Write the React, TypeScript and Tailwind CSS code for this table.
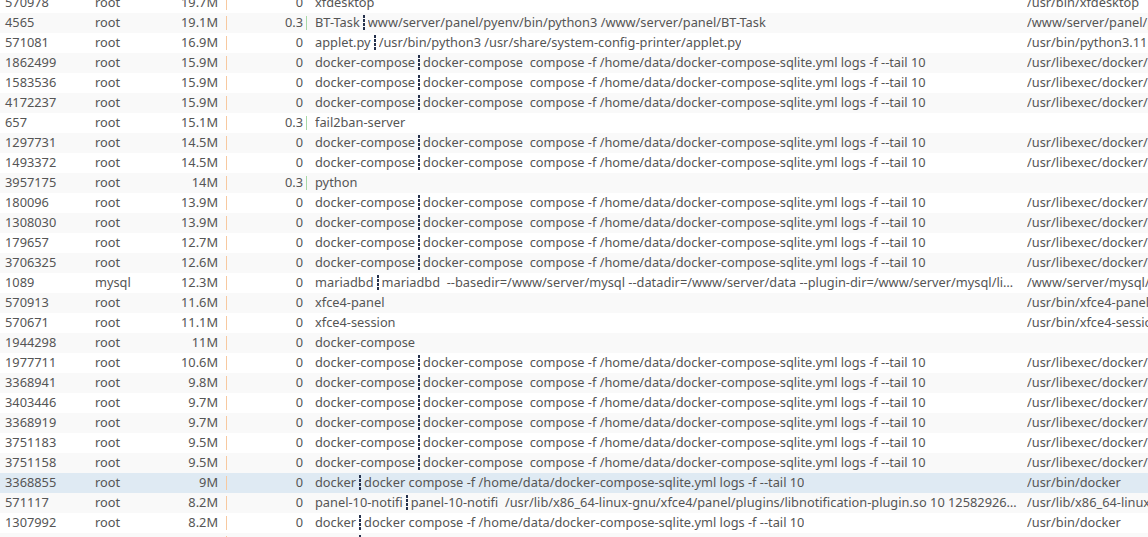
import React from "react";

type Row = {
  pid: string;
  user: string;
  mem: string;
  cpu: string;
  name: string;
  cmd?: string;
  path: string;
  selected?: boolean;
};

const DC = "docker-compose  compose -f /home/data/docker-compose-sqlite.yml logs -f --tail 10";
const DCP = "/usr/libexec/docker/cli-plugins/docker-compose";
const DK = "docker compose -f /home/data/docker-compose-sqlite.yml logs -f --tail 10";

const rows: Row[] = [
  { pid: "570978", user: "root", mem: "19.7M", cpu: "0", name: "xfdesktop", path: "/usr/bin/xfdesktop" },
  { pid: "4565", user: "root", mem: "19.1M", cpu: "0.3", name: "BT-Task", cmd: "www/server/panel/pyenv/bin/python3 /www/server/panel/BT-Task", path: "/www/server/panel/pyenv/bin/python3.7" },
  { pid: "571081", user: "root", mem: "16.9M", cpu: "0", name: "applet.py", cmd: "/usr/bin/python3 /usr/share/system-config-printer/applet.py", path: "/usr/bin/python3.11" },
  { pid: "1862499", user: "root", mem: "15.9M", cpu: "0", name: "docker-compose", cmd: DC, path: DCP },
  { pid: "1583536", user: "root", mem: "15.9M", cpu: "0", name: "docker-compose", cmd: DC, path: DCP },
  { pid: "4172237", user: "root", mem: "15.9M", cpu: "0", name: "docker-compose", cmd: DC, path: DCP },
  { pid: "657", user: "root", mem: "15.1M", cpu: "0.3", name: "fail2ban-server", path: "" },
  { pid: "1297731", user: "root", mem: "14.5M", cpu: "0", name: "docker-compose", cmd: DC, path: DCP },
  { pid: "1493372", user: "root", mem: "14.5M", cpu: "0", name: "docker-compose", cmd: DC, path: DCP },
  { pid: "3957175", user: "root", mem: "14M", cpu: "0.3", name: "python", path: "" },
  { pid: "180096", user: "root", mem: "13.9M", cpu: "0", name: "docker-compose", cmd: DC, path: DCP },
  { pid: "1308030", user: "root", mem: "13.9M", cpu: "0", name: "docker-compose", cmd: DC, path: DCP },
  { pid: "179657", user: "root", mem: "12.7M", cpu: "0", name: "docker-compose", cmd: DC, path: DCP },
  { pid: "3706325", user: "root", mem: "12.6M", cpu: "0", name: "docker-compose", cmd: DC, path: DCP },
  { pid: "1089", user: "mysql", mem: "12.3M", cpu: "0", name: "mariadbd", cmd: "mariadbd  --basedir=/www/server/mysql --datadir=/www/server/data --plugin-dir=/www/server/mysql/lib/plugin --user=mysql", path: "/www/server/mysql/bin/mariadbd" },
  { pid: "570913", user: "root", mem: "11.6M", cpu: "0", name: "xfce4-panel", path: "/usr/bin/xfce4-panel" },
  { pid: "570671", user: "root", mem: "11.1M", cpu: "0", name: "xfce4-session", path: "/usr/bin/xfce4-session" },
  { pid: "1944298", user: "root", mem: "11M", cpu: "0", name: "docker-compose", path: "" },
  { pid: "1977711", user: "root", mem: "10.6M", cpu: "0", name: "docker-compose", cmd: DC, path: DCP },
  { pid: "3368941", user: "root", mem: "9.8M", cpu: "0", name: "docker-compose", cmd: DC, path: DCP },
  { pid: "3403446", user: "root", mem: "9.7M", cpu: "0", name: "docker-compose", cmd: DC, path: DCP },
  { pid: "3368919", user: "root", mem: "9.7M", cpu: "0", name: "docker-compose", cmd: DC, path: DCP },
  { pid: "3751183", user: "root", mem: "9.5M", cpu: "0", name: "docker-compose", cmd: DC, path: DCP },
  { pid: "3751158", user: "root", mem: "9.5M", cpu: "0", name: "docker-compose", cmd: DC, path: DCP },
  { pid: "3368855", user: "root", mem: "9M", cpu: "0", name: "docker", cmd: DK, path: "/usr/bin/docker", selected: true },
  { pid: "571117", user: "root", mem: "8.2M", cpu: "0", name: "panel-10-notifi", cmd: "panel-10-notifi  /usr/lib/x86_64-linux-gnu/xfce4/panel/plugins/libnotification-plugin.so 10 12582926 notification-plugin", path: "/usr/lib/x86_64-linux-gnu/xfce4/panel/wrapper-2.0" },
  { pid: "1307992", user: "root", mem: "8.2M", cpu: "0", name: "docker", cmd: DK, path: "/usr/bin/docker" },
  { pid: "1307981", user: "root", mem: "8.1M", cpu: "0", name: "docker", cmd: DK, path: "/usr/bin/docker" },
];

function Sep() {
  return (
    <span className="mx-[3px] inline-block h-[16px] w-[2px] shrink-0 bg-[repeating-linear-gradient(to_bottom,#26324d_0px,#26324d_3px,transparent_3px,transparent_4px)]" />
  );
}

export default function App() {
  return (
    <div
      className="h-[537px] w-[1148px] overflow-hidden bg-white text-[12.8px] text-[#555]"
      style={{ fontFamily: '"Noto Sans", "Open Sans", "Noto Sans CJK SC", sans-serif' }}
    >
      <div className="-mt-[7px] flex flex-col">
        {rows.map((r, i) => (
          <div
            key={i}
            className={
              "flex h-5 items-center whitespace-nowrap " +
              (r.selected ? "bg-[#dfeaf3]" : i % 2 === 1 ? "bg-[#f9f9f9]" : "bg-white")
            }
          >
            <div className="w-[95px] shrink-0 pl-[5px]">{r.pid}</div>
            <div className="w-[70px] shrink-0">{r.user}</div>
            <div className="w-[53px] shrink-0 text-right">{r.mem}</div>
            <div className="w-[8px] shrink-0" />
            <div className="h-[14px] w-px shrink-0 bg-[#f7c9a0]" />
            <div className="w-[76px] shrink-0 text-right">{r.cpu}</div>
            <div className="w-[3px] shrink-0" />
            <div className={"h-[14px] w-px shrink-0 " + (r.cpu !== "0" ? "bg-[#a9d9a9]" : "")} />
            <div className="w-[8px] shrink-0" />
            <div className="flex w-[702px] shrink-0 items-center overflow-hidden">
              <span className="shrink-0 whitespace-pre">{r.name}</span>
              {r.cmd && <Sep />}
              {r.cmd && (
                <span className="min-w-0 overflow-hidden text-ellipsis whitespace-pre">{r.cmd}</span>
              )}
            </div>
            <div className="w-[10px] shrink-0" />
            <div className="min-w-0 flex-1 overflow-hidden whitespace-nowrap">{r.path}</div>
          </div>
        ))}
      </div>
    </div>
  );
}
